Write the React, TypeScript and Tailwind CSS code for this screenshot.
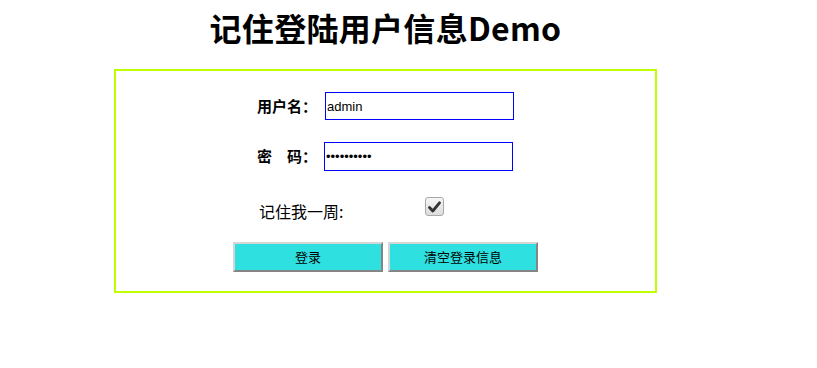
import React from 'react';

const cjk = "font-['Noto_Sans_CJK_SC',sans-serif]";

function CheckMark() {
  return (
    <span className="flex h-[19px] w-[19px] items-center justify-center rounded-[3px] border border-[#a9a9a9] bg-gradient-to-b from-[#f6f6f6] to-[#dcdcdc]">
      <svg width="13" height="12" viewBox="0 0 13 12">
        <path d="M1.5 6.5 L4.8 10 L11.5 1.8" fill="none" stroke="#333" strokeWidth="2.8" strokeLinejoin="round" strokeLinecap="round" />
      </svg>
    </span>
  );
}

export default function App() {
  return (
    <div className={`h-[368px] w-[817px] bg-white text-black ${cjk}`}>
      <div className="ml-[114px] w-[543px]">
        <h1 className="pt-[7px] text-center text-[32px] font-bold leading-[40px] tracking-[0.3px]">记住登陆用户信息Demo</h1>

        <div className="mt-[22px] h-[224px] border-2 border-[#bfff00]">
          {/* username */}
          <div className="mt-[21px] flex h-[28px] items-center">
            <span className="ml-[141px] w-[68px] text-[15px] font-bold">用户名：</span>
            <input
              readOnly
              value="admin"
              className="h-[28px] w-[189px] border border-[#0000ff] px-[1px] font-['Liberation_Sans',sans-serif] text-[13px] outline-none"
            />
          </div>

          {/* password */}
          <div className="mt-[22px] flex h-[29px] items-center">
            <span className="ml-[141px] w-[67px] text-[15px] font-bold">密　码：</span>
            <input
              readOnly
              type="password"
              value="1234567890"
              className="h-[29px] w-[189px] border border-[#0000ff] px-[1px] font-['Liberation_Sans',sans-serif] text-[13px] outline-none"
            />
          </div>

          {/* remember */}
          <div className="mt-[26px] flex h-[19px] items-start">
            <span className="ml-[143px] mt-[3px] w-[166px] text-[16px] leading-[22px]">记住我一周:</span>
            <CheckMark />
          </div>

          {/* buttons */}
          <div className="mt-[26px] flex gap-[5px] pl-[117px]">
            <button className="h-[30px] w-[150px] border-2 border-t-[#d6d6d6] border-l-[#d6d6d6] border-r-[#858585] border-b-[#858585] bg-[#2ee0e0] text-[13px]">
              登录
            </button>
            <button className="h-[30px] w-[150px] border-2 border-t-[#d6d6d6] border-l-[#d6d6d6] border-r-[#858585] border-b-[#858585] bg-[#2ee0e0] text-[13px]">
              清空登录信息
            </button>
          </div>
        </div>
      </div>
    </div>
  );
}
